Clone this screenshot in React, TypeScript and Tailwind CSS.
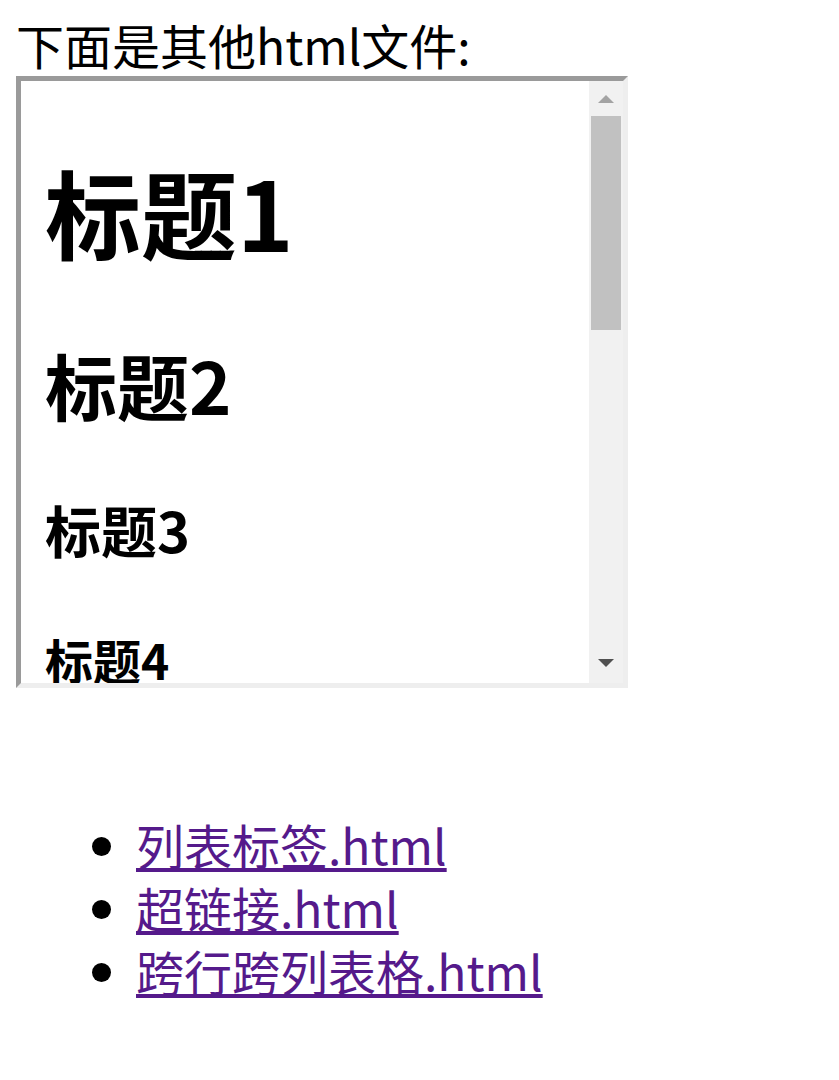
export default function App() {
  const links = ["列表标签.html", "超链接.html", "跨行跨列表格.html"];

  return (
    <div className="min-h-screen bg-white text-black pl-4 pt-[13px] font-['Noto_Sans_CJK_SC','Noto_Sans',sans-serif]">
      <p className="text-[48px] leading-[63px]">下面是其他html文件:</p>

      {/* Embedded frame */}
      <div className="flex w-[612px] h-[612px] border-[5px] border-t-[#9a9a9a] border-l-[#9a9a9a] border-r-[#eeeeee] border-b-[#eeeeee]">
        <div className="flex-1 overflow-hidden px-6 pt-[82px] font-bold">
          <h1 className="text-[96px] leading-[96px]">标题1</h1>
          <h2 className="mt-[89px] text-[72px] leading-[72px]">标题2</h2>
          <h3 className="mt-[81px] text-[56px] leading-[56px]">标题3</h3>
          <h4 className="mt-[78px] text-[48px] leading-[48px]">标题4</h4>
        </div>

        {/* Scrollbar */}
        <div className="flex w-[34px] flex-col items-center bg-[#f1f1f1]">
          <div className="flex h-[35px] w-full items-center justify-center">
            <svg width="16" height="8" viewBox="0 0 16 8">
              <path d="M8 0 L16 8 L0 8 Z" fill="#a3a3a3" />
            </svg>
          </div>
          <div className="h-[214px] w-[30px] bg-[#c1c1c1]" />
          <div className="flex-1" />
          <div className="flex h-[40px] w-full items-center justify-center">
            <svg width="16" height="8" viewBox="0 0 16 8">
              <path d="M0 0 L16 0 L8 8 Z" fill="#505050" />
            </svg>
          </div>
        </div>
      </div>

      <ul className="mt-[125px] list-disc pl-[120px] text-[48px] leading-[63px]">
        {links.map((l) => (
          <li key={l}>
            <a href="#" className="text-[#551a8b] underline">
              {l}
            </a>
          </li>
        ))}
      </ul>
    </div>
  );
}
